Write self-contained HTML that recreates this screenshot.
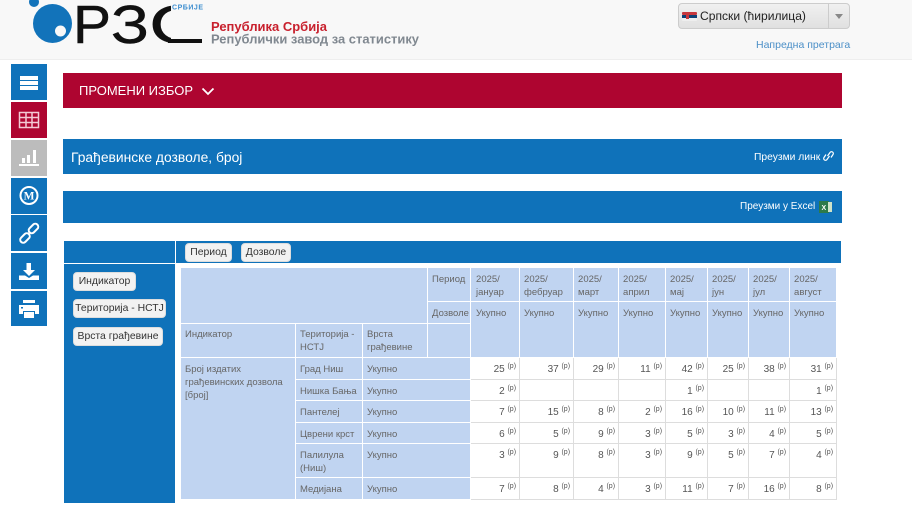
<!DOCTYPE html>
<html><head><meta charset="utf-8">
<style>
html,body{margin:0;padding:0;width:912px;height:513px;overflow:hidden;background:#fff;font-family:"Liberation Sans",sans-serif}
.a{position:absolute}
.side{position:absolute;left:11px;width:36px;background:#0f72ba;display:block}
.bar{position:absolute;left:63px;width:779px;background:#0f72ba;color:#fff}
.btn{position:absolute;background:#f2f2f2;border:1px solid #ddd;border-radius:4px;color:#333;font-size:10.4px;line-height:17px;height:17px;text-align:center;box-sizing:content-box;white-space:nowrap}
table{position:absolute;left:181px;top:267px;border-collapse:separate;border-spacing:0;table-layout:fixed;width:656px;font-size:9.5px;color:#666}
td{padding:0 0 0 4px;box-sizing:border-box;vertical-align:top;line-height:13px;overflow:hidden}
td.h{background:#c0d4f1;border-right:1px solid #fff;border-bottom:1px solid #fff;padding-top:5px}
td.d{background:#fff;border-right:1px solid #ddd;border-bottom:1px solid #ddd;text-align:right;padding:5px 3px 0 0;font-size:10px;color:#555}
td.j{padding-left:5px}
sup{font-size:7px;line-height:0;vertical-align:4px;color:#555}
</style></head>
<body>
<div class="a" style="left:0;top:0;width:912px;height:59px;background:#f8f8f8;border-bottom:1px solid #eee"></div>
<svg class="a" style="left:0;top:0" width="440" height="59">
<defs><clipPath id="cc"><rect x="140" y="0" width="31" height="59"/></clipPath></defs>
<circle cx="34" cy="2" r="5" fill="#1273ba"/>
<circle cx="52.5" cy="23.5" r="19.5" fill="#1273ba"/>
<circle cx="60.5" cy="31" r="5.5" fill="#f8f8f8"/>
<text x="73" y="43" font-family="Liberation Sans" font-size="54" fill="#111" stroke="#111" stroke-width=".5" textLength="38" lengthAdjust="spacingAndGlyphs">Р</text>
<text x="111" y="43" font-family="Liberation Sans" font-size="54" fill="#111" stroke="#111" stroke-width=".5" textLength="38" lengthAdjust="spacingAndGlyphs">З</text>
<text x="149" y="43" font-family="Liberation Sans" font-size="54" fill="#111" stroke="#111" stroke-width=".5" textLength="56" lengthAdjust="spacingAndGlyphs" clip-path="url(#cc)">С</text>
<rect x="168" y="39" width="34" height="4" fill="#111"/>
<text x="172" y="9.5" font-family="Liberation Sans" font-weight="bold" font-size="7" fill="#3f8fd0" textLength="31">СРБИЈЕ</text>
<text x="211" y="31" font-family="Liberation Sans" font-weight="bold" font-size="13" fill="#c8202d" textLength="116" lengthAdjust="spacingAndGlyphs">Република Србија</text>
<text x="211" y="43.5" font-family="Liberation Sans" font-weight="bold" font-size="13" fill="#808890" textLength="208" lengthAdjust="spacingAndGlyphs">Републички завод за статистику</text>
</svg>
<div class="a" style="left:678px;top:3px;width:172px;height:26px;box-sizing:border-box;border:1px solid #ccc;border-radius:4px;background:linear-gradient(#f0f0f0,#e0e0e0)"></div>
<div class="a" style="left:828px;top:4px;width:1px;height:24px;background:#ccc"></div>
<div class="a" style="left:835px;top:14px;width:0;height:0;border-left:4px solid transparent;border-right:4px solid transparent;border-top:5px solid #888"></div>
<svg class="a" style="left:682px;top:12px" width="15" height="9"><rect width="15" height="3" y="0" rx="1" fill="#c6363c"/><rect width="15" height="3" y="3" fill="#0c4076"/><rect width="15" height="3" y="6" rx="1" fill="#eee"/><rect x="4" y="2" width="3" height="5" fill="#c6363c"/></svg>
<div class="a" style="left:700px;top:8px;font-size:12.1px;line-height:16px;color:#222">Српски (ћирилица)</div>
<div class="a" style="left:756px;top:38px;font-size:10.5px;line-height:14px;color:#4b8fc7">Напредна претрага</div>

<div class="side" style="top:64px;height:36px"><svg width="36" height="36"><rect x="9" y="12" width="18" height="4" fill="#fff"/><rect x="9" y="17" width="18" height="4" fill="#fff"/><rect x="9" y="22" width="18" height="4" fill="#fff"/></svg></div>
<div class="side" style="top:102px;height:36px;background:#ae0530"><svg width="36" height="36" fill="none" stroke="#f3c9d4" stroke-width="1.5"><rect x="8.5" y="10.500" width="19" height="15"/><path d="M8.5 15.500H27.5M8.5 20.500H27.5M15 10.500V25.500M21 10.500V25.500"/></svg></div>
<div class="side" style="top:140px;height:36px;background:#bcbcbc"><svg width="36" height="36" fill="#fff"><rect x="8" y="24" width="20" height="2"/><rect x="11" y="18" width="3" height="5"/><rect x="16" y="15" width="3" height="8"/><rect x="22" y="10" width="3" height="13"/></svg></div>
<div class="side" style="top:178px;height:36px"><svg width="36" height="36"><circle cx="18" cy="17.5" r="8.5" fill="none" stroke="#fff" stroke-width="2"/><text x="18" y="21.500" text-anchor="middle" font-family="Liberation Serif" font-weight="bold" font-size="11.5" fill="#fff">M</text></svg></div>
<div class="side" style="top:215px;height:36px"><svg width="36" height="36" fill="none" stroke="#fff" stroke-width="2"><rect x="17" y="10.500" width="11" height="6" rx="3" transform="rotate(-45 22.500 13.500)"/><rect x="8.500" y="20" width="11" height="6" rx="3" transform="rotate(-45 14 23)"/></svg></div>
<div class="side" style="top:253px;height:36px"><svg width="36" height="36" fill="#fff"><rect x="15.500" y="10" width="4.500" height="8"/><path d="M12 17H24L18 23z"/><path d="M8 22.500H14L18 25L22 22.500H28V27H8z"/></svg></div>
<div class="side" style="top:291px;height:35px"><svg width="36" height="36" fill="#fff"><rect x="12" y="9" width="12" height="3"/><path d="M8 14H28V23H24V20H12V23H8z"/><rect x="13" y="21" width="10" height="6"/><rect x="10" y="16" width="2" height="1.5" fill="#0f72ba"/></svg></div>

<div class="bar" style="top:73px;height:35px;background:#ae0530"></div>
<div class="a" style="left:79px;top:83px;color:#fff;font-size:13px;line-height:16px;white-space:nowrap">ПРОМЕНИ ИЗБОР</div>
<svg class="a" style="left:201px;top:87px" width="14" height="10"><path d="M1.5 1.500L7 7L12.5 1.500" fill="none" stroke="#fff" stroke-width="1.8"/></svg>

<div class="bar" style="top:139px;height:35px"></div>
<div class="a" style="left:71px;top:148px;color:#fff;font-size:13.85px;line-height:18px;white-space:nowrap">Грађевинске дозволе, број</div>
<div class="a" style="left:754px;top:151px;color:#fff;font-size:10.3px;line-height:14px;white-space:nowrap">Преузми линк</div>
<svg class="a" style="left:823px;top:150px" width="11" height="12" fill="none" stroke="#fff" stroke-width="1.2"><path d="M4.5 6l2.500-3.500a1.800 1.800 0 0 1 3 2l-2 3"/><path d="M6.500 6l-2.500 3.500a1.800 1.800 0 0 1-3-2l2-3"/></svg>
<div class="bar" style="top:191px;height:32px"></div>
<div class="a" style="left:740px;top:200px;color:#fff;font-size:10px;line-height:14px;white-space:nowrap">Преузми у Excel</div>
<svg class="a" style="left:819px;top:200px" width="13" height="14"><rect x="0" y="1" width="10" height="12" fill="#2d7a4a"/><rect x="9" y="2" width="4" height="10" fill="#cfe3c8"/><text x="2.5" y="10" font-family="Liberation Sans" font-size="7" font-weight="bold" fill="#fff">X</text></svg>

<div class="a" style="left:64px;top:241px;width:111px;height:262px;background:#0f72ba"></div>
<div class="a" style="left:64px;top:263px;width:111px;height:1px;background:#fff"></div>
<div class="a" style="left:176px;top:241px;width:665px;height:22px;background:#0f72ba"></div>
<div class="btn" style="left:185px;top:243px;width:45px">Период</div>
<div class="btn" style="left:241px;top:243px;width:48px">Дозволе</div>
<div class="btn" style="left:73px;top:272px;width:61px">Индикатор</div>
<div class="btn" style="left:73px;top:299px;width:91px">Територија - НСТЈ</div>
<div class="btn" style="left:73px;top:327px;width:88px">Врста грађевине</div>

<table>
<colgroup><col style="width:115px"><col style="width:67px"><col style="width:65px"><col style="width:43px"><col style="width:49px"><col style="width:54px"><col style="width:45px"><col style="width:47px"><col style="width:42px"><col style="width:41px"><col style="width:41px"><col style="width:47px"></colgroup>
<tr style="height:35px"><td class="h" colspan="3" rowspan="2" style="border-top:1px solid #fff"></td><td class="h" style="border-top:1px solid #fff">Период</td><td class="h j" style="border-top:1px solid #fff">2025/<br>јануар</td><td class="h" style="border-top:1px solid #fff">2025/<br>фебруар</td><td class="h" style="border-top:1px solid #fff">2025/<br>март</td><td class="h" style="border-top:1px solid #fff">2025/<br>април</td><td class="h" style="border-top:1px solid #fff">2025/<br>мај</td><td class="h" style="border-top:1px solid #fff">2025/<br>јун</td><td class="h" style="border-top:1px solid #fff">2025/<br>јул</td><td class="h" style="border-top:1px solid #fff">2025/<br>август</td></tr>
<tr style="height:22px"><td class="h">Дозволе</td><td class="h j" rowspan="2">Укупно</td><td class="h" rowspan="2">Укупно</td><td class="h" rowspan="2">Укупно</td><td class="h" rowspan="2">Укупно</td><td class="h" rowspan="2">Укупно</td><td class="h" rowspan="2">Укупно</td><td class="h" rowspan="2">Укупно</td><td class="h" rowspan="2">Укупно</td></tr>
<tr style="height:34px"><td class="h" style="padding-top:4px">Индикатор</td><td class="h" style="padding-top:4px">Територија - НСТЈ</td><td class="h" style="padding-top:4px">Врста грађевине</td><td class="h"></td></tr>
<tr style="height:22px"><td class="h" rowspan="6">Број издатих грађевинских дозвола [број]</td><td class="h">Град Ниш</td><td class="h" colspan="2">Укупно</td><td class="d">25 <sup>(p)</sup></td><td class="d">37 <sup>(p)</sup></td><td class="d">29 <sup>(p)</sup></td><td class="d">11 <sup>(p)</sup></td><td class="d">42 <sup>(p)</sup></td><td class="d">25 <sup>(p)</sup></td><td class="d">38 <sup>(p)</sup></td><td class="d">31 <sup>(p)</sup></td></tr>
<tr style="height:21px"><td class="h">Нишка Бања</td><td class="h" colspan="2">Укупно</td><td class="d">2 <sup>(p)</sup></td><td class="d"></td><td class="d"></td><td class="d"></td><td class="d">1 <sup>(p)</sup></td><td class="d"></td><td class="d"></td><td class="d">1 <sup>(p)</sup></td></tr>
<tr style="height:22px"><td class="h">Пантелеј</td><td class="h" colspan="2">Укупно</td><td class="d">7 <sup>(p)</sup></td><td class="d">15 <sup>(p)</sup></td><td class="d">8 <sup>(p)</sup></td><td class="d">2 <sup>(p)</sup></td><td class="d">16 <sup>(p)</sup></td><td class="d">10 <sup>(p)</sup></td><td class="d">11 <sup>(p)</sup></td><td class="d">13 <sup>(p)</sup></td></tr>
<tr style="height:21px"><td class="h">Цврени крст</td><td class="h" colspan="2">Укупно</td><td class="d">6 <sup>(p)</sup></td><td class="d">5 <sup>(p)</sup></td><td class="d">9 <sup>(p)</sup></td><td class="d">3 <sup>(p)</sup></td><td class="d">5 <sup>(p)</sup></td><td class="d">3 <sup>(p)</sup></td><td class="d">4 <sup>(p)</sup></td><td class="d">5 <sup>(p)</sup></td></tr>
<tr style="height:34px"><td class="h">Палилула (Ниш)</td><td class="h" colspan="2">Укупно</td><td class="d">3 <sup>(p)</sup></td><td class="d">9 <sup>(p)</sup></td><td class="d">8 <sup>(p)</sup></td><td class="d">3 <sup>(p)</sup></td><td class="d">9 <sup>(p)</sup></td><td class="d">5 <sup>(p)</sup></td><td class="d">7 <sup>(p)</sup></td><td class="d">4 <sup>(p)</sup></td></tr>
<tr style="height:22px"><td class="h">Медијана</td><td class="h" colspan="2">Укупно</td><td class="d">7 <sup>(p)</sup></td><td class="d">8 <sup>(p)</sup></td><td class="d">4 <sup>(p)</sup></td><td class="d">3 <sup>(p)</sup></td><td class="d">11 <sup>(p)</sup></td><td class="d">7 <sup>(p)</sup></td><td class="d">16 <sup>(p)</sup></td><td class="d">8 <sup>(p)</sup></td></tr>
</table>
</body></html>
